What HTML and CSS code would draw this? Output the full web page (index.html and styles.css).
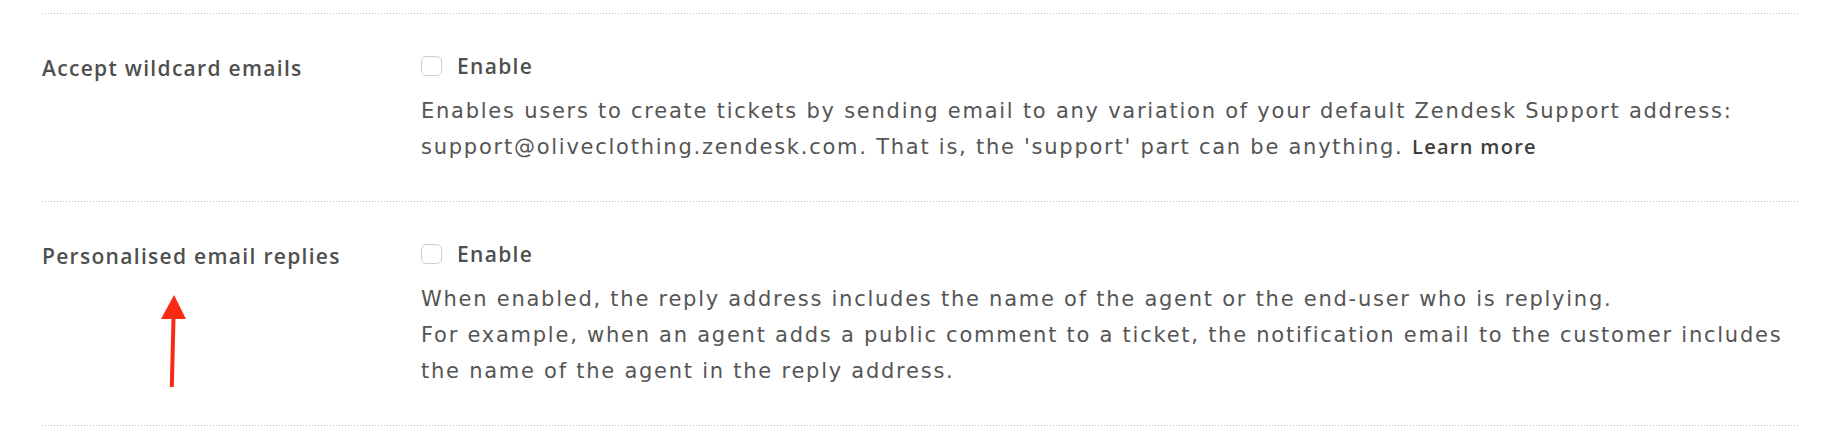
FILE: index.html
```
<!DOCTYPE html>
<html lang="en">
<head>
<meta charset="utf-8">
<title>Email settings</title>
<link rel="stylesheet" href="styles.css">
</head>
<body>
<div class="page">
  <div class="settings">
    <div class="row">
      <div class="label">Accept wildcard emails</div>
      <div class="control">
        <label class="check"><input type="checkbox" class="box"><span>Enable</span></label>
        <p class="desc">Enables users to create tickets by sending email to any variation of your default Zendesk Support address: support@oliveclothing.zendesk.com. That is, the 'support' part can be anything. <a class="learn" href="#">Learn more</a></p>
      </div>
    </div>
    <div class="row">
      <div class="label">Personalised email replies</div>
      <div class="control">
        <label class="check"><input type="checkbox" class="box"><span>Enable</span></label>
        <p class="desc">When enabled, the reply address includes the name of the agent or the end-user who is replying.<br>For example, when an agent adds a public comment to a ticket, the notification email to the customer includes the name of the agent in the reply address.</p>
      </div>
    </div>
  </div>
  <svg class="arrow" width="40" height="100" viewBox="0 0 40 100" aria-hidden="true">
    <polygon points="19,5 6,29 31,29" fill="#fa2a12"/>
    <line x1="18.5" y1="28" x2="16.8" y2="97" stroke="#fa2a12" stroke-width="4"/>
  </svg>
</div>
</body>
</html>
```
FILE: styles.css
```
html, body {
  margin: 0;
  padding: 0;
  background: #ffffff;
}

.page {
  position: relative;
  padding-top: 13px;
  height: 421px;
}

.settings {
  margin-left: 42px;
  width: 1757px;
}

.settings::after {
  content: "";
  display: block;
  height: 1px;
  background: repeating-linear-gradient(90deg, #c2c2c2 0 1px, transparent 1px 3px);
}

.row {
  display: grid;
  grid-template-columns: 379px 1fr;
  padding-top: 1px;
  background: repeating-linear-gradient(90deg, #c2c2c2 0 1px, transparent 1px 3px) top left / 100% 1px no-repeat;
}

.label {
  padding-top: 42px;
  font-family: "Open Sans", "Lato", sans-serif;
  font-weight: 600;
  font-size: 21px;
  letter-spacing: 1.3px;
  line-height: 24px;
  color: #4f4f4f;
}

.control {
  padding-top: 40px;
  padding-bottom: 36px;
}

.check {
  display: flex;
  align-items: center;
  height: 24px;
  gap: 15px;
  font-family: "Open Sans", "Lato", sans-serif;
  font-weight: 600;
  font-size: 21px;
  letter-spacing: 1.3px;
  color: #4f4f4f;
}

.box {
  appearance: none;
  -webkit-appearance: none;
  margin: 0;
  width: 21px;
  height: 20px;
  border: 1px solid #cfcfcf;
  border-radius: 5px;
  background: #fff;
  box-shadow: inset 0 1px 1px rgba(0,0,0,0.04);
}

.desc {
  margin: 15px 0 0;
  font-family: "DejaVu Sans", sans-serif;
  font-size: 21px;
  letter-spacing: 1.75px;
  line-height: 36px;
  color: #555555;
}

.learn {
  font-family: "Open Sans", "Lato", sans-serif;
  font-weight: 600;
  font-size: 20px;
  letter-spacing: 1.3px;
  color: #3f3f3f;
  text-decoration: none;
}

.arrow {
  position: absolute;
  left: 155px;
  top: 290px;
}
```
